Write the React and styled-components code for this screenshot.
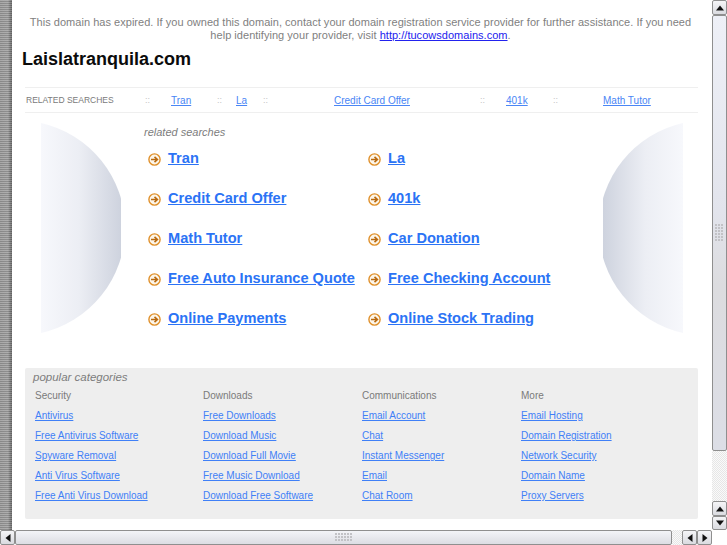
import React from "react";
import styled, { createGlobalStyle } from "styled-components";

const Global = createGlobalStyle`
  html, body { margin: 0; padding: 0; background: #fff; overflow: hidden; }
  body { font-family: "Liberation Sans", Arial, sans-serif; }
  * { box-sizing: border-box; }
`;

const Viewport = styled.div`
  width: 727px;
  height: 545px;
  display: grid;
  grid-template-columns: 12px 700px 15px;
  grid-template-rows: 530px 15px;
  overflow: hidden;
`;

const FrameEdge = styled.div`
  background:
    repeating-linear-gradient(180deg, rgba(255,255,255,.14) 0 1px, rgba(0,0,0,.12) 1px 2px),
    linear-gradient(90deg, #9a9a9a 0, #a2a2a2 8px, #808080 10px, #6a6a6a 12px);
`;

const Main = styled.main`
  padding: 16px 14px 0 13px;
  min-width: 0;
  overflow: hidden;
`;

const Notice = styled.p`
  margin: 0 0 0 -2px;
  width: 675px;
  text-align: center;
  font-size: 11px;
  letter-spacing: 0.03px;
  line-height: 13px;
  color: #7f7f7f;
`;

const NoticeLink = styled.a`
  color: #2222ee;
  text-decoration: underline;
`;

const Title = styled.h1`
  margin: 5px 0 0 -3px;
  font-size: 18px;
  line-height: 24px;
  font-weight: 700;
  color: #0b0b0b;
`;

const NavBar = styled.div`
  margin-top: 16px;
  height: 26px;
  border-top: 1px solid #efefef;
  border-bottom: 1px solid #efefef;
  display: grid;
  grid-template-columns: 120px 26px 46px 19px 27px 71px 146px 26px 47px 50px 1fr;
  align-items: center;
  font-size: 10px;
`;

const NavLabel = styled.span`
  padding-left: 1px;
  font-size: 8.5px;
  color: #7a7a7a;
  white-space: nowrap;
`;

const NavSep = styled.span`
  font-size: 9px;
  color: #c4c4c4;
`;

const NavLink = styled.a`
  color: #4a86f5;
  text-decoration: underline;
  white-space: nowrap;
`;

const Stage = styled.section`
  height: 255px;
  padding-top: 10px;
  display: grid;
  grid-template-columns: 96px 1fr 95px;
`;

const Globe = styled.svg`
  display: block;
  width: 80px;
  height: 210px;
  margin-left: ${(p) => p.$left}px;
`;

const Results = styled.div`
  padding: 2px 0 0 23px;
`;

const ResultsCaption = styled.div`
  font-size: 11px;
  line-height: 14px;
  font-style: italic;
  color: #7d7d7d;
`;

const ResultGrid = styled.div`
  margin-top: 7px;
  display: grid;
  grid-template-columns: 220px 1fr;
  grid-auto-rows: 40px;
`;

const Result = styled.div`
  display: flex;
  align-items: flex-start;
  padding-left: 4px;
  gap: 7px;
`;

const ResultIcon = styled.svg`
  width: 13px;
  height: 13px;
  flex: none;
  margin-top: 7px;
`;

const ResultLink = styled.a`
  font-size: 14.6px;
  line-height: 24px;
  font-weight: 700;
  color: #2b73f5;
  text-decoration: underline;
  white-space: nowrap;
`;

const Popular = styled.section`
  height: 151px;
  background: #eeeeee;
  border-radius: 2px;
  padding: 2px 10px 0 8px;
`;

const PopularCaption = styled.div`
  font-size: 11.5px;
  line-height: 14px;
  font-style: italic;
  color: #7d7d7d;
`;

const Columns = styled.div`
  margin-top: 2px;
  padding-left: 2px;
  display: grid;
  grid-template-columns: 168px 159px 159px 1fr;
`;

const Column = styled.div`
  display: flex;
  flex-direction: column;
`;

const ColumnHead = styled.div`
  font-size: 10px;
  line-height: 20px;
  color: #7a7a7a;
`;

const ColumnRow = styled.div`
  height: 20px;
  line-height: 20px;
  font-size: 10px;
`;

const ColumnLink = styled.a`
  color: #3f80f7;
  text-decoration: underline;
  white-space: nowrap;
`;

const VBar = styled.div`
  grid-column: 3;
  grid-row: 1;
  display: flex;
  flex-direction: column;
  background: #fff;
`;

const Thumb = styled.div`
  flex: none;
  ${(p) => `${p.$vertical ? "height" : "width"}: ${p.$size}px;`}
  display: flex;
  align-items: center;
  justify-content: center;
  border: 1px solid #8f8f8f;
  border-radius: 2px;
  background: ${(p) =>
    p.$vertical
      ? "linear-gradient(180deg, #eef0f7 0, #e2e4ec 45%, #dcdcdf 62%, #dcdee6 100%)"
      : "linear-gradient(180deg, #f3f4f8 0, #dcdde3 100%)"};
`;

const Grip = styled.svg`
  display: block;
  flex: none;
`;

const Trough = styled.div`
  flex: 1;
  background: repeating-conic-gradient(#e6e6e6 0 25%, #fafafa 0 50%) 0 0 / 2px 2px;
`;

const Arrow = styled.button`
  width: ${(p) => p.$w || 15}px;
  height: ${(p) => p.$h || 15}px;
  flex: none;
  padding: 0;
  display: flex;
  align-items: center;
  justify-content: center;
  border: 1px solid #8f8f8f;
  border-radius: 2px;
  background: linear-gradient(180deg, #f5f5f7 0, #dadbe0 100%);
`;

const ArrowGlyph = styled.svg`
  display: block;
  width: 8px;
  height: 8px;
`;

const HBar = styled.div`
  grid-column: 1 / span 2;
  grid-row: 2;
  display: flex;
  background: #fff;
`;

const Corner = styled.div`
  grid-column: 3;
  grid-row: 2;
  background: #fff;
`;

const ARROWS = {
  up: "M4 1.5 L8 6.5 L0 6.5 Z",
  down: "M4 6.5 L0 1.5 L8 1.5 Z",
  left: "M1.5 4 L6.5 0 L6.5 8 Z",
  right: "M6.5 4 L1.5 0 L1.5 8 Z",
};

const ScrollArrow = ({ dir, w, h }) => (
  <Arrow $w={w} $h={h} aria-label={dir}>
    <ArrowGlyph viewBox="0 0 8 8">
      <path d={ARROWS[dir]} fill="#111" />
    </ArrowGlyph>
  </Arrow>
);

const GripDots = ({ cols, rows }) => {
  const dots = [];
  for (let y = 0; y < rows; y++)
    for (let x = 0; x < cols; x++)
      dots.push(<rect key={`${x}-${y}`} x={x * 3} y={y * 3} width="2" height="2" fill="#c2c2c6" />);
  return (
    <Grip width={cols * 3} height={rows * 3}>
      {dots}
    </Grip>
  );
};

const GlobeArt = ({ flip, left, id }) => (
  <Globe viewBox="0 0 80 210" $left={left}>
    <defs>
      <linearGradient id={id} x1={flip ? "1" : "0"} x2={flip ? "0" : "1"} y1="0" y2="0">
        <stop offset="0" stopColor="#f7f8fc" />
        <stop offset="0.45" stopColor="#eceef4" />
        <stop offset="1" stopColor="#cbd0dc" />
      </linearGradient>
    </defs>
    <path
      d={flip ? "M80 0 A107.6 107.6 0 0 0 80 210 Z" : "M0 0 A107.6 107.6 0 0 1 0 210 Z"}
      fill={`url(#${id})`}
    />
  </Globe>
);

const ArrowBadge = () => (
  <ResultIcon viewBox="0 0 13 13">
    <circle cx="6.5" cy="6.5" r="5.6" fill="#fdf6ea" stroke="#e0902a" strokeWidth="1.4" />
    <path d="M3 6.5 H9 M6.5 3.8 L9.4 6.5 L6.5 9.2" fill="none" stroke="#b96a10" strokeWidth="1.6" />
  </ResultIcon>
);

const navCells = ["Tran", "La", null, "Credit Card Offer", "401k", "Math Tutor"];

const results = [
  "Tran", "La",
  "Credit Card Offer", "401k",
  "Math Tutor", "Car Donation",
  "Free Auto Insurance Quote", "Free Checking Account",
  "Online Payments", "Online Stock Trading",
];

const categories = [
  { head: "Security", links: ["Antivirus", "Free Antivirus Software", "Spyware Removal", "Anti Virus Software", "Free Anti Virus Download"] },
  { head: "Downloads", links: ["Free Downloads", "Download Music", "Download Full Movie", "Free Music Download", "Download Free Software"] },
  { head: "Communications", links: ["Email Account", "Chat", "Instant Messenger", "Email", "Chat Room"] },
  { head: "More", links: ["Email Hosting", "Domain Registration", "Network Security", "Domain Name", "Proxy Servers"] },
];

export default function App() {
  return (
    <Viewport>
      <Global />
      <FrameEdge />
      <Main>
        <Notice>
          This domain has expired. If you owned this domain, contact your domain registration service provider for further assistance. If you need<br />help identifying your provider, visit <NoticeLink href="#">http://tucowsdomains.com</NoticeLink>.
        </Notice>
        <Title>Laislatranquila.com</Title>
        <NavBar>
          <NavLabel>RELATED SEARCHES</NavLabel>
          {navCells.map((c, i) => (
            <React.Fragment key={i}>
              {c === null ? (
                <NavSep>::</NavSep>
              ) : (
                <>
                  {i !== 3 && <NavSep>::</NavSep>}
                  <span><NavLink href="#">{c}</NavLink></span>
                </>
              )}
            </React.Fragment>
          ))}
        </NavBar>
        <Stage>
          <GlobeArt id="globe-left" left={16} />
          <Results>
            <ResultsCaption>related searches</ResultsCaption>
            <ResultGrid>
              {results.map((r) => (
                <Result key={r}>
                  <ArrowBadge />
                  <ResultLink href="#">{r}</ResultLink>
                </Result>
              ))}
            </ResultGrid>
          </Results>
          <GlobeArt id="globe-right" flip left={0} />
        </Stage>
        <Popular>
          <PopularCaption>popular categories</PopularCaption>
          <Columns>
            {categories.map((c) => (
              <Column key={c.head}>
                <ColumnHead>{c.head}</ColumnHead>
                {c.links.map((l) => (
                  <ColumnRow key={l}><ColumnLink href="#">{l}</ColumnLink></ColumnRow>
                ))}
              </Column>
            ))}
          </Columns>
        </Popular>
      </Main>
      <VBar>
        <ScrollArrow dir="up" />
        <Thumb $vertical $size={436}>
          <GripDots cols={3} rows={6} />
        </Thumb>
        <Trough />
        <ScrollArrow dir="up" />
        <ScrollArrow dir="down" h={14} />
      </VBar>
      <HBar>
        <ScrollArrow dir="left" />
        <Thumb $size={657}>
          <GripDots cols={6} rows={3} />
        </Thumb>
        <Trough />
        <ScrollArrow dir="left" />
        <ScrollArrow dir="right" />
      </HBar>
      <Corner />
    </Viewport>
  );
}
